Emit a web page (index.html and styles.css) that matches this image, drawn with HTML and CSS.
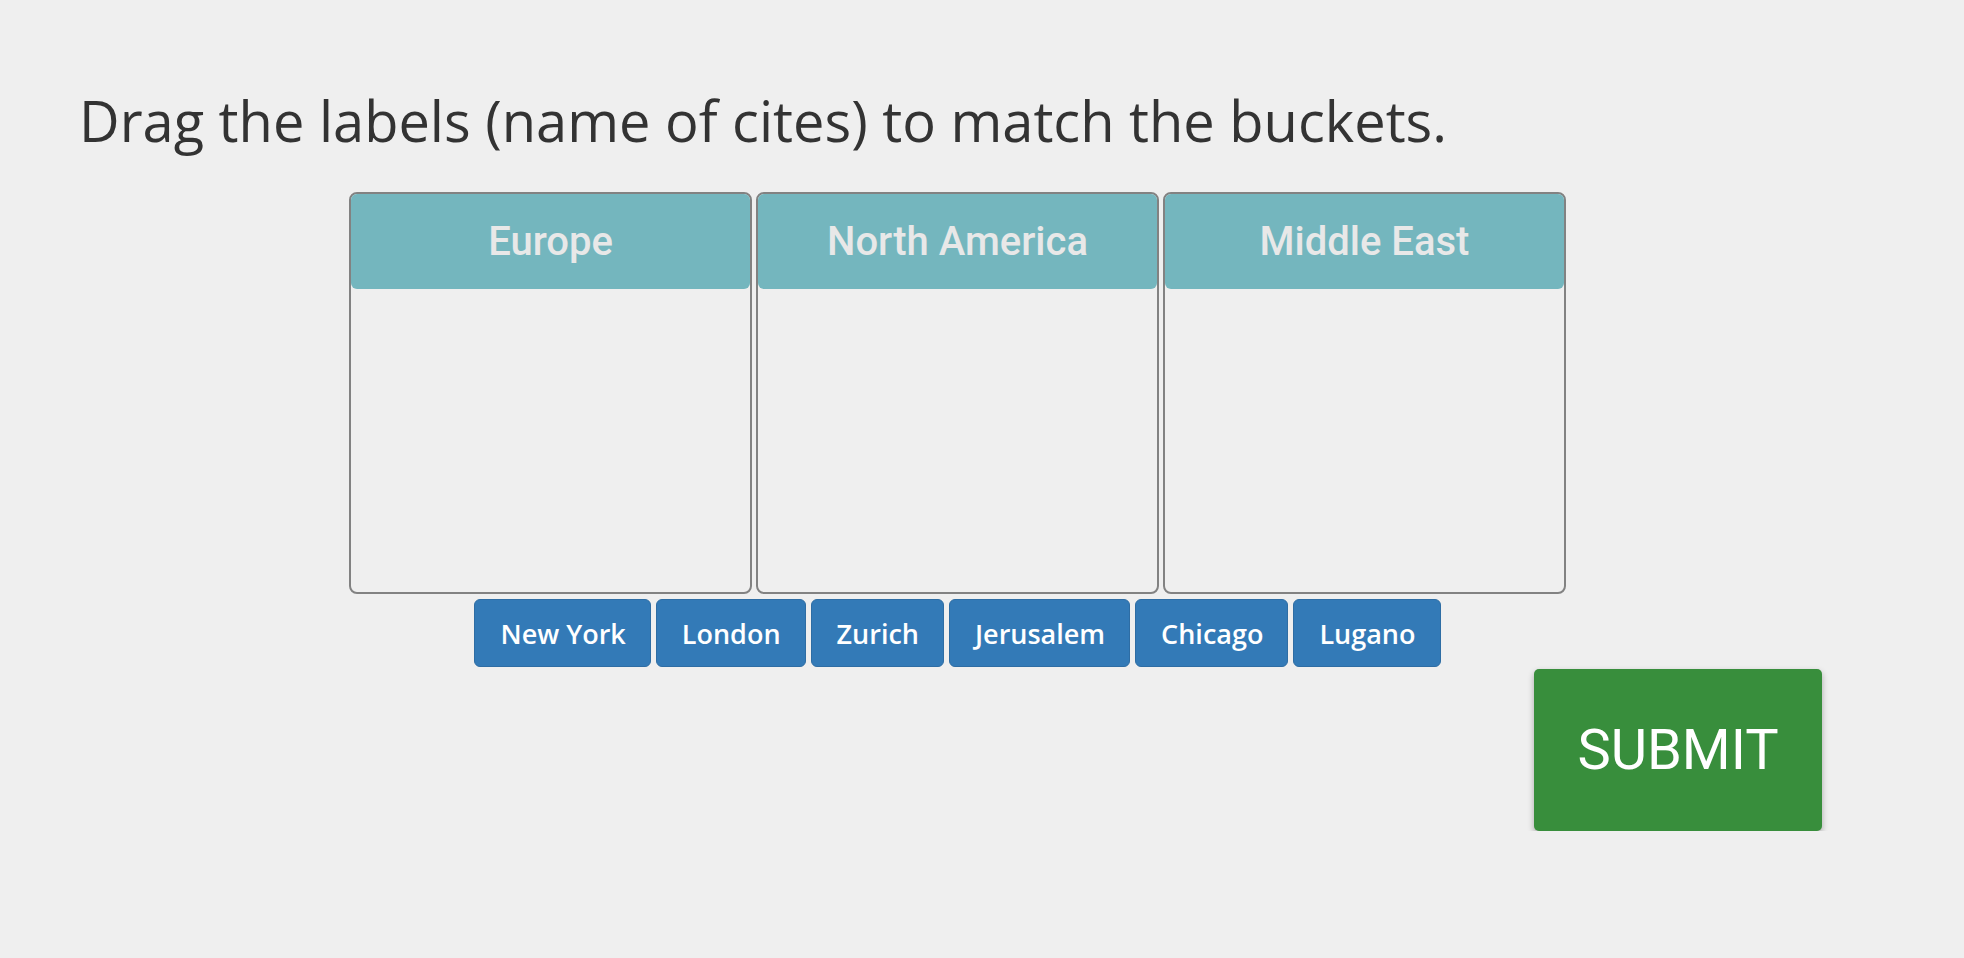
FILE: index.html
```html
<!DOCTYPE html>
<html lang="en">
<head>
<meta charset="utf-8">
<title>Drag the labels</title>
<link rel="stylesheet" href="styles.css">
</head>
<body>
<main class="page">
  <h1 class="title">Drag the labels (name of cites) to match the buckets.</h1>
  <section class="buckets">
    <div class="bucket"><div class="bucket-head">Europe</div></div>
    <div class="bucket"><div class="bucket-head">North America</div></div>
    <div class="bucket"><div class="bucket-head">Middle East</div></div>
  </section>
  <section class="labels">
    <div class="label">New York</div>
    <div class="label">London</div>
    <div class="label">Zurich</div>
    <div class="label">Jerusalem</div>
    <div class="label">Chicago</div>
    <div class="label">Lugano</div>
  </section>
  <div class="actions">
    <button class="submit" type="button">SUBMIT</button>
  </div>
</main>
</body>
</html>
```
FILE: styles.css
```css
html, body {
  margin: 0;
  padding: 0;
  background: #efefef;
}

.page {
  padding: 87px 128px 0 79px;
}

.title {
  margin: 0;
  font-family: "Open Sans", sans-serif;
  font-weight: 400;
  font-size: 56px;
  line-height: 66px;
  color: #333333;
}

.buckets {
  display: flex;
  justify-content: center;
  gap: 4px;
  margin-top: 39px;
}

.bucket {
  box-sizing: border-box;
  width: 403px;
  height: 402px;
  border: 2px solid #828282;
  border-radius: 8px;
}

.bucket-head {
  height: 95px;
  background: #74b6be;
  border-radius: 6px;
  display: flex;
  align-items: center;
  justify-content: center;
  font-family: Roboto, sans-serif;
  font-weight: 500;
  font-size: 40px;
  color: #e8e8e8;
}

.labels {
  display: flex;
  justify-content: center;
  gap: 5px;
  margin-top: 5px;
}

.label {
  box-sizing: border-box;
  height: 68px;
  padding: 0 24px 0 25px;
  display: flex;
  align-items: center;
  background: #337ab7;
  border: 1px solid #2e6da4;
  border-radius: 6px;
  color: #ffffff;
  font-family: "Open Sans", sans-serif;
  font-weight: 600;
  font-size: 27px;
}

.actions {
  display: flex;
  justify-content: flex-end;
  margin-top: 2px;
  padding-right: 14px;
}

.submit {
  width: 288px;
  height: 162px;
  border: none;
  border-radius: 5px;
  background: #388e3c;
  color: #ffffff;
  font-family: Roboto, sans-serif;
  font-weight: 400;
  font-size: 56px;
  box-shadow: 0 3px 6px rgba(0, 0, 0, 0.3);
  cursor: pointer;
}
```
